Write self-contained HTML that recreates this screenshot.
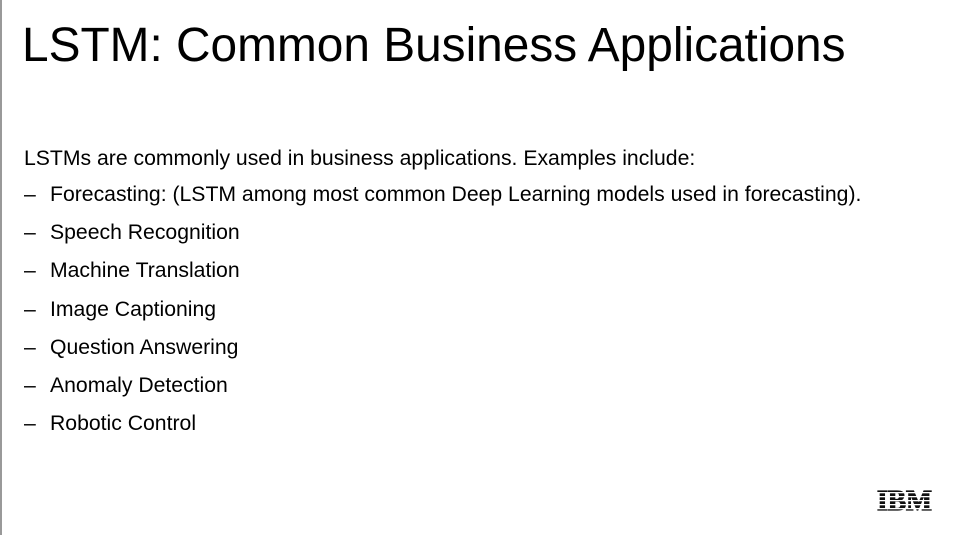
<!DOCTYPE html>
<html><head><style>
body{margin:0;width:955px;height:535px;background:#fff;position:relative;overflow:hidden;font-family:"Liberation Sans",Arial,sans-serif;color:#000}
.bar{position:absolute;left:0;top:0;width:2px;height:535px;background:#999}
h1{position:absolute;left:22px;top:18px;margin:0;font-weight:normal;font-size:47.8px;line-height:56px;white-space:nowrap}
.l{position:absolute;left:24px;font-size:21.2px;line-height:24px;white-space:nowrap}
.d{position:absolute;left:24px;font-size:21.2px;line-height:24px}
.t{left:50px}
</style></head><body>
<div class="bar"></div>
<h1>LSTM: Common Business Applications</h1>
<div class="l" style="top:147px">LSTMs are commonly used in business applications. Examples include:</div>
<div class="d" style="top:183px">–</div><div class="l t" style="top:183px">Forecasting: (LSTM among most common Deep Learning models used in forecasting).</div>
<div class="d" style="top:221px">–</div><div class="l t" style="top:221px">Speech Recognition</div>
<div class="d" style="top:259px">–</div><div class="l t" style="top:259px">Machine Translation</div>
<div class="d" style="top:298px">–</div><div class="l t" style="top:298px">Image Captioning</div>
<div class="d" style="top:336px">–</div><div class="l t" style="top:336px">Question Answering</div>
<div class="d" style="top:374px">–</div><div class="l t" style="top:374px">Anomaly Detection</div>
<div class="d" style="top:412px">–</div><div class="l t" style="top:412px">Robotic Control</div>
<svg style="position:absolute;left:876px;top:486px" width="58" height="28">
<text x="1" y="24" font-family="Liberation Serif,serif" font-weight="bold" font-size="29" textLength="55" lengthAdjust="spacingAndGlyphs" fill="#111" stroke="#111" stroke-width="1.2">IBM</text>
<g fill="#fff"><rect x="0" y="6" width="58" height="1.3"/><rect x="0" y="10" width="58" height="1.3"/><rect x="0" y="14" width="58" height="1.3"/><rect x="0" y="18" width="58" height="1.3"/><rect x="0" y="22" width="58" height="1.3"/></g>
</svg>
</body></html>
